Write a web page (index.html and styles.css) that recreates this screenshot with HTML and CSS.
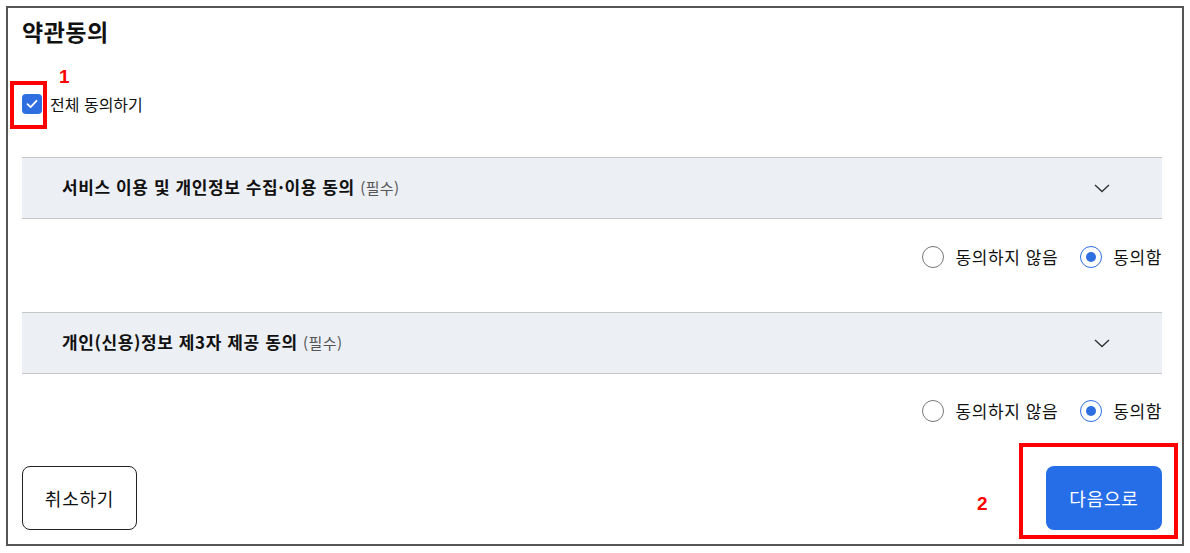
FILE: index.html
```html
<!DOCTYPE html>
<html lang="ko">
<head>
<meta charset="utf-8">
<title>약관동의</title>
<link rel="stylesheet" href="styles.css">
</head>
<body>
<div class="frame">
  <h1 class="title">약관동의</h1>

  <label class="all-agree">
    <span class="checkbox">
      <svg width="20" height="20" viewBox="0 0 20 20"><path d="M5.5 10.2 L8.6 13.2 L14.5 6.8" fill="none" stroke="#fff" stroke-width="1.8" stroke-linecap="round" stroke-linejoin="round"/></svg>
      <span class="mark mark-1"></span>
      <span class="mark-num num-1">1</span>
    </span>
    <span class="all-text">전체 동의하기</span>
  </label>

  <section class="term">
    <div class="term-head">
      <span class="term-title">서비스 이용 및 개인정보 수집·이용 동의 <span class="req">(필수)</span></span>
      <svg class="chev" width="16" height="9" viewBox="0 0 16 9"><path d="M1 1 L8 7.5 L15 1" fill="none" stroke="#333" stroke-width="1.4"/></svg>
    </div>
    <div class="choice">
      <span class="opt"><span class="radio"></span>동의하지 않음</span>
      <span class="opt"><span class="radio on"></span>동의함</span>
    </div>
  </section>

  <section class="term">
    <div class="term-head">
      <span class="term-title">개인(신용)정보 제3자 제공 동의 <span class="req">(필수)</span></span>
      <svg class="chev" width="16" height="9" viewBox="0 0 16 9"><path d="M1 1 L8 7.5 L15 1" fill="none" stroke="#333" stroke-width="1.4"/></svg>
    </div>
    <div class="choice">
      <span class="opt"><span class="radio"></span>동의하지 않음</span>
      <span class="opt"><span class="radio on"></span>동의함</span>
    </div>
  </section>

  <div class="actions">
    <button class="btn btn-cancel">취소하기</button>
    <button class="btn btn-next">다음으로
      <span class="mark mark-2"></span>
      <span class="mark-num num-2">2</span>
    </button>
  </div>
</div>
</body>
</html>
```

FILE: styles.css
```css
* { box-sizing: border-box; }
html, body { margin: 0; padding: 0; background: #fff; }
body {
  font-family: "Noto Sans CJK KR", "Noto Sans", sans-serif;
  color: #111;
  padding: 6px;
}
.frame {
  width: 1178px;
  height: 540px;
  border: 2px solid #555;
  padding: 8px 20px 0 14px;
}
.title {
  margin: 0;
  font-size: 23px;
  letter-spacing: 0.5px;
  line-height: 30px;
  font-weight: 700;
  color: #111;
}
.all-agree {
  display: flex;
  align-items: center;
  gap: 8px;
  margin-top: 48px;
  height: 20px;
}
.checkbox {
  position: relative;
  width: 20px;
  height: 20px;
  border-radius: 4px;
  background: #2e6ee0;
  display: block;
}
.checkbox svg { display: block; }
.all-text { font-size: 16px; line-height: 20px; color: #111; }

.mark {
  position: absolute;
  border: 4px solid #f00;
}
.mark-1 { left: -12px; top: -13px; width: 37px; height: 48px; }
.mark-num {
  position: absolute;
  color: #f00;
  font-family: "Liberation Sans", sans-serif;
  font-weight: 700;
  font-size: 19px;
  line-height: 20px;
}
.num-1 { left: 37px; top: -27px; }

.term:first-of-type { margin-top: 43px; }
.term-head {
  height: 62px;
  border-top: 1px solid #c6c6c6;
  border-bottom: 1px solid #c6c6c6;
  background: #eceff4;
  display: flex;
  align-items: center;
  justify-content: space-between;
  padding: 0 52px 0 40px;
}
.term-title {
  font-size: 17px;
  letter-spacing: 0.6px;
  line-height: 24px;
  font-weight: 700;
  color: #111;
  margin-top: -2px;
}
.req {
  font-size: 15px;
  letter-spacing: 0.4px;
  font-weight: 400;
  color: #555;
}
.chev { display: block; }

.choice {
  display: flex;
  justify-content: flex-end;
  gap: 22px;
  padding: 27px 0 44px;
}
.term + .term .choice { padding-top: 26px; }
.opt {
  display: flex;
  align-items: center;
  gap: 11px;
  font-size: 17px;
  letter-spacing: 0.6px;
  line-height: 22px;
  color: #111;
}
.radio {
  width: 22px;
  height: 22px;
  border-radius: 50%;
  border: 1px solid #777;
  background: #fff;
  position: relative;
}
.radio.on { border-color: #2e6ee0; }
.radio.on::after {
  content: "";
  position: absolute;
  left: 5px; top: 5px;
  width: 10px; height: 10px;
  border-radius: 50%;
  background: #2e6ee0;
}

.actions {
  display: flex;
  justify-content: space-between;
  margin-top: 0;
}
.btn {
  height: 64px;
  border-radius: 8px;
  font-family: "Noto Sans CJK KR", "Noto Sans", sans-serif;
  font-size: 18px;
  letter-spacing: 0.8px;
  cursor: pointer;
  position: relative;
}
.btn-cancel {
  width: 115px;
  background: #fff;
  border: 1px solid #222;
  color: #111;
}
.btn-next {
  width: 116px;
  background: #266ee8;
  border: none;
  color: #fff;
}
.mark-2 { left: -27px; top: -23px; width: 159px; height: 96px; }
.num-2 { left: -69px; top: 28px; }
```
